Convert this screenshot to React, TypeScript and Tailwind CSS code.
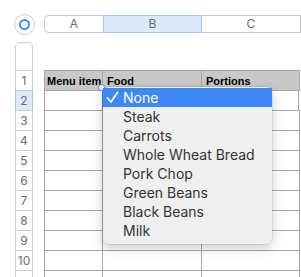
const foods = ['None', 'Steak', 'Carrots', 'Whole Wheat Bread', 'Pork Chop', 'Green Beans', 'Black Beans', 'Milk']
const rows = [2, 3, 4, 5, 6, 7, 8, 9, 10, 11]

export default function App() {
  return (
    <div className="relative w-[301px] h-[277px] overflow-hidden bg-white font-['Inter',sans-serif]">
      {/* top: select-all circle + column letters */}
      <div className="flex items-center pt-[12px] pl-[14px] h-[36px]">
        <div className="flex h-[21px] w-[21px] items-center justify-center rounded-full border border-[#c9c9c9] bg-white">
          <div className="h-[11px] w-[11px] rounded-full border-[2px] border-[#3d8ef5]" />
        </div>
        <div className="ml-[9px] flex h-[18px] flex-1 text-[12px] text-[#6b6b6b]">
          <div className="flex w-[59px] items-center justify-center rounded-l-[5px] border border-r-0 border-[#c9c9c9]">A</div>
          <div className="flex w-[99px] items-center justify-center border border-[#a8c4ea] bg-[#dce9fb]">B</div>
          <div className="flex w-[99px] items-center justify-center border border-l-0 border-[#c9c9c9]">C</div>
        </div>
      </div>

      <div className="flex pl-[15px] pt-[6px]">
        {/* row numbers */}
        <div className="flex w-[18px] flex-col text-[12px] text-[#6b6b6b]">
          <div className="h-[28px] rounded-t-[5px] border border-b-0 border-[#cfcfcf]" />
          <div className="flex h-[20px] items-center justify-center border border-b-0 border-[#cfcfcf]">1</div>
          {rows.map((r) => (
            <div
              key={r}
              className={
                r === 2
                  ? 'flex h-[20px] items-center justify-center border border-b-0 border-[#a8c4ea] bg-[#dce9fb]'
                  : 'flex h-[20px] items-center justify-center border border-b-0 border-[#cfcfcf]'
              }
            >
              {r < 11 ? r : ''}
            </div>
          ))}
        </div>

        {/* table */}
        <div className="ml-[11px] mt-[28px] flex flex-col">
          <div className="flex h-[20px] bg-[#c8c8c8] font-['Liberation_Sans',sans-serif] text-[11px] font-bold text-black border-t border-[#a6a6a6] whitespace-nowrap">
            <div className="w-[59px] border-l border-r border-[#a6a6a6] pl-[2px] leading-[20px]">Menu item</div>
            <div className="w-[99px] border-r border-[#a6a6a6] pl-[4px] leading-[20px]">Food</div>
            <div className="w-[98px] border-r border-[#a6a6a6] pl-[4px] leading-[20px]">Portions</div>
          </div>
          {rows.map((r) => (
            <div key={r} className="flex h-[20px] border-t border-[#a6a6a6]">
              <div className="w-[59px] border-l border-r border-[#a6a6a6]" />
              <div className={r === 2 ? 'w-[99px] border-r border-l border-l-[#3d8ef5] -ml-[1px] border-r-[#a6a6a6]' : 'w-[99px] border-r border-[#a6a6a6]'} />
              <div className="w-[98px] border-r border-[#a6a6a6]" />
            </div>
          ))}
        </div>
      </div>

      {/* selection handle */}
      <div className="absolute left-[98px] top-[84px] h-[7px] w-[7px] rounded-full border border-[#3d8ef5] bg-white" />

      {/* popup menu */}
      <div className="absolute left-[103px] top-[87px] w-[169px] rounded-[6px] bg-[#efefef] pt-[1px] pb-[4px] shadow-[0_4px_12px_rgba(0,0,0,0.22),0_0_0_0.5px_rgba(0,0,0,0.12)]">
        {foods.map((f, i) => (
          <div
            key={f}
            className={
              i === 0
                ? 'flex h-[19px] items-center bg-[#3d88f5] pl-[3px] text-[14px] text-white'
                : 'flex h-[19px] items-center pl-[20px] text-[14px] text-[#333333]'
            }
          >
            {i === 0 && (
              <svg width="13" height="13" viewBox="0 0 13 13" className="mr-[4px]">
                <path d="M1.5 7 L5 11 L11.5 1.5" fill="none" stroke="white" strokeWidth="1.8" strokeLinecap="round" strokeLinejoin="round" />
              </svg>
            )}
            {f}
          </div>
        ))}
      </div>
    </div>
  )
}
